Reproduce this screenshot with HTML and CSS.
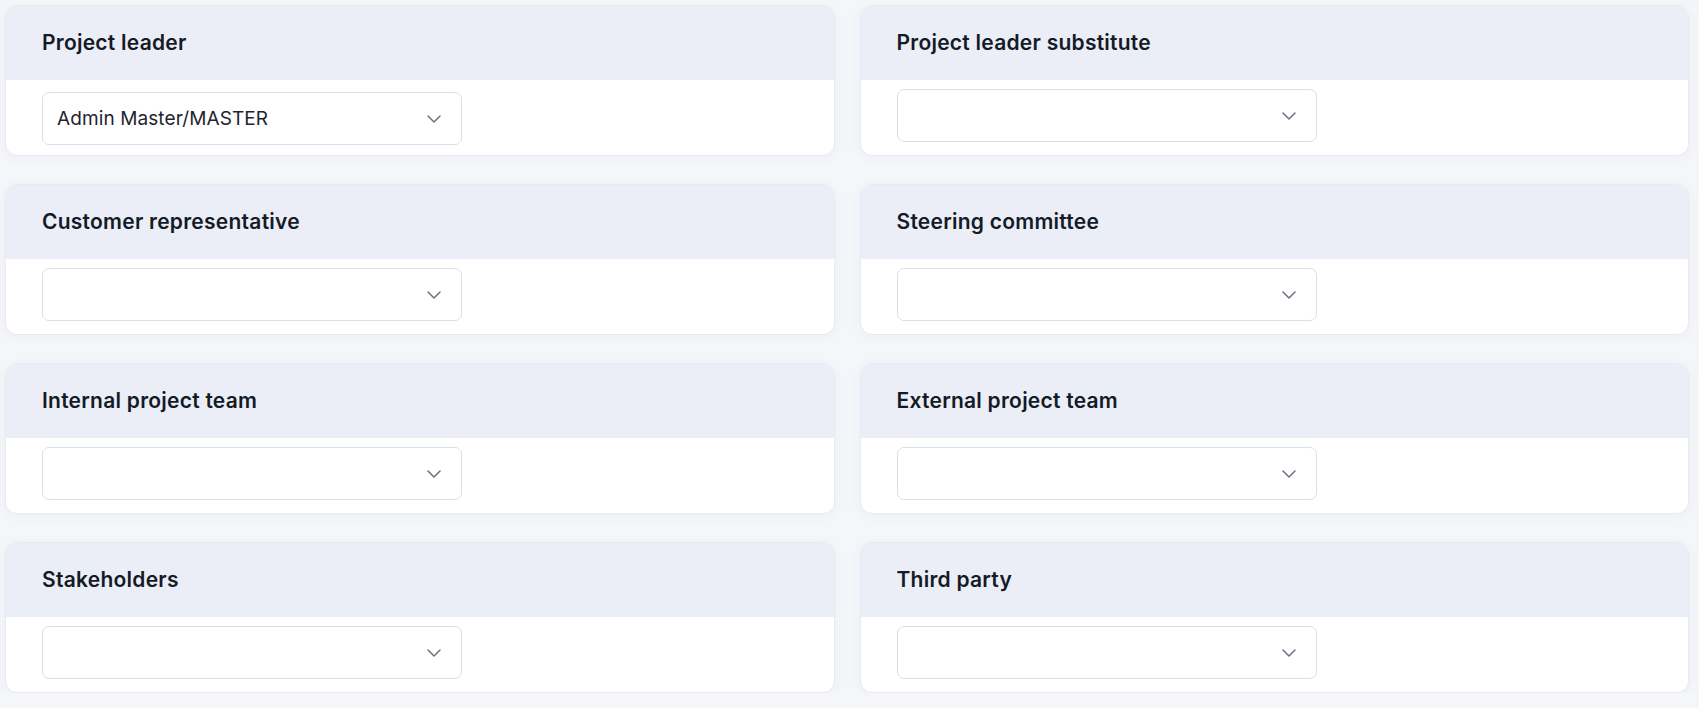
FILE: index.html
```html
<!DOCTYPE html>
<html lang="en">
<head>
<meta charset="utf-8">
<title>Project roles</title>
<link rel="stylesheet" href="styles.css">
</head>
<body>
<main class="grid">
  <section class="card">
    <header class="card-head"><h2 class="card-title">Project leader</h2></header>
    <div class="card-body">
      <div class="select select--filled">
        <span class="select-value">Admin Master/MASTER</span>
        <svg class="chev" width="14" height="8" viewBox="0 0 14 8"><path d="M1 1l6 6 6-6" fill="none" stroke="currentColor" stroke-width="1.5" stroke-linecap="round" stroke-linejoin="round"/></svg>
      </div>
    </div>
  </section>
  <section class="card">
    <header class="card-head"><h2 class="card-title">Project leader substitute</h2></header>
    <div class="card-body">
      <div class="select">
        <span class="select-value"></span>
        <svg class="chev" width="14" height="8" viewBox="0 0 14 8"><path d="M1 1l6 6 6-6" fill="none" stroke="currentColor" stroke-width="1.5" stroke-linecap="round" stroke-linejoin="round"/></svg>
      </div>
    </div>
  </section>
  <section class="card">
    <header class="card-head"><h2 class="card-title">Customer representative</h2></header>
    <div class="card-body">
      <div class="select">
        <span class="select-value"></span>
        <svg class="chev" width="14" height="8" viewBox="0 0 14 8"><path d="M1 1l6 6 6-6" fill="none" stroke="currentColor" stroke-width="1.5" stroke-linecap="round" stroke-linejoin="round"/></svg>
      </div>
    </div>
  </section>
  <section class="card">
    <header class="card-head"><h2 class="card-title">Steering committee</h2></header>
    <div class="card-body">
      <div class="select">
        <span class="select-value"></span>
        <svg class="chev" width="14" height="8" viewBox="0 0 14 8"><path d="M1 1l6 6 6-6" fill="none" stroke="currentColor" stroke-width="1.5" stroke-linecap="round" stroke-linejoin="round"/></svg>
      </div>
    </div>
  </section>
  <section class="card">
    <header class="card-head"><h2 class="card-title">Internal project team</h2></header>
    <div class="card-body">
      <div class="select">
        <span class="select-value"></span>
        <svg class="chev" width="14" height="8" viewBox="0 0 14 8"><path d="M1 1l6 6 6-6" fill="none" stroke="currentColor" stroke-width="1.5" stroke-linecap="round" stroke-linejoin="round"/></svg>
      </div>
    </div>
  </section>
  <section class="card">
    <header class="card-head"><h2 class="card-title">External project team</h2></header>
    <div class="card-body">
      <div class="select">
        <span class="select-value"></span>
        <svg class="chev" width="14" height="8" viewBox="0 0 14 8"><path d="M1 1l6 6 6-6" fill="none" stroke="currentColor" stroke-width="1.5" stroke-linecap="round" stroke-linejoin="round"/></svg>
      </div>
    </div>
  </section>
  <section class="card">
    <header class="card-head"><h2 class="card-title">Stakeholders</h2></header>
    <div class="card-body">
      <div class="select">
        <span class="select-value"></span>
        <svg class="chev" width="14" height="8" viewBox="0 0 14 8"><path d="M1 1l6 6 6-6" fill="none" stroke="currentColor" stroke-width="1.5" stroke-linecap="round" stroke-linejoin="round"/></svg>
      </div>
    </div>
  </section>
  <section class="card">
    <header class="card-head"><h2 class="card-title">Third party</h2></header>
    <div class="card-body">
      <div class="select">
        <span class="select-value"></span>
        <svg class="chev" width="14" height="8" viewBox="0 0 14 8"><path d="M1 1l6 6 6-6" fill="none" stroke="currentColor" stroke-width="1.5" stroke-linecap="round" stroke-linejoin="round"/></svg>
      </div>
    </div>
  </section>
</main>
</body>
</html>
```
FILE: styles.css
```css
* { box-sizing: border-box; }
html, body {
  margin: 0;
  padding: 0;
  background: #f5f6fa;
  font-family: Inter, "Open Sans", "Liberation Sans", sans-serif;
  color: #161b26;
}
.grid {
  display: grid;
  grid-template-columns: 1fr 1fr;
  column-gap: 25px;
  row-gap: 28px;
  padding: 5px 10px 0 5px;
}
.card {
  background: #ffffff;
  border: 1px solid #e8eaf0;
  border-radius: 12px;
  overflow: hidden;
  box-shadow: 0 2px 14px rgba(30, 40, 80, 0.035);
  height: 151px;
  display: flex;
  flex-direction: column;
}
.card-head {
  background: #ebeef6;
  height: 74px;
  display: flex;
  align-items: center;
  padding: 0 36px 2px;
}
.card-title {
  margin: 0;
  font-size: 21px;
  font-weight: 600;
  letter-spacing: 0.25px;
  color: #141a26;
}
.card-body {
  padding: 9px 36px 0;
}
.select {
  width: 420px;
  height: 53px;
  border: 1px solid #dcdde5;
  border-radius: 7px;
  background: #fff;
  display: flex;
  align-items: center;
  justify-content: space-between;
  padding: 0 20px 0 14px;
}
.select--filled {
  margin-top: 3px;
}
.select-value {
  font-size: 19px;
  font-weight: 400;
  letter-spacing: 0.1px;
  color: #1f2430;
}
.chev {
  color: #6b7180;
  display: block;
}
```
